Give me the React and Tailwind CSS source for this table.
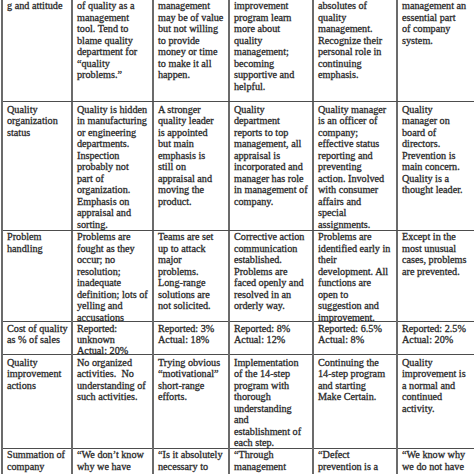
import React from 'react';

const rows = [
  {
    h: 'h-[102px]',
    pt: 'pt-0',
    cells: [
      ['g and attitude'],
      ['of quality as a', 'management', 'tool. Tend to', 'blame quality', 'department for', '“quality', 'problems.”'],
      ['management', 'may be of value', 'but not willing', 'to provide', 'money or time', 'to make it all', 'happen.'],
      ['improvement', 'program learn', 'more about', 'quality', 'management;', 'becoming', 'supportive and', 'helpful.'],
      ['absolutes of', 'quality', 'management.', 'Recognize their', 'personal role in', 'continuing', 'emphasis.'],
      ['management an', 'essential part', 'of company', 'system.'],
    ],
  },
  {
    h: 'h-[129px]',
    pt: 'pt-[1.5px]',
    cells: [
      ['Quality', 'organization', 'status'],
      ['Quality is hidden', 'in manufacturing', 'or engineering', 'departments.', 'Inspection', 'probably not', 'part of', 'organization.', 'Emphasis on', 'appraisal and', 'sorting.'],
      ['A stronger', 'quality leader', 'is appointed', 'but main', 'emphasis is', 'still on', 'appraisal and', 'moving the', 'product.'],
      ['Quality', 'department', 'reports to top', 'management, all', 'appraisal is', 'incorporated and', 'manager has role', 'in management of', 'company.'],
      ['Quality manager', 'is an officer of', 'company;', 'effective status', 'reporting and', 'preventing', 'action. Involved', 'with consumer', 'affairs and', 'special', 'assignments.'],
      ['Quality', 'manager on', 'board of', 'directors.', 'Prevention is', 'main concern.', 'Quality is a', 'thought leader.'],
    ],
  },
  {
    h: 'h-[91px]',
    pt: 'pt-0',
    cells: [
      ['Problem', 'handling'],
      ['Problems are', 'fought as they', 'occur; no', 'resolution;', 'inadequate', 'definition; lots of', 'yelling and', 'accusations'],
      ['Teams are set', 'up to attack', 'major', 'problems.', 'Long-range', 'solutions are', 'not solicited.'],
      ['Corrective action', 'communication', 'established.', 'Problems are', 'faced openly and', 'resolved in an', 'orderly way.'],
      ['Problems are', 'identified early in', 'their', 'development. All', 'functions are', 'open to', 'suggestion and', 'improvement.'],
      ['Except in the', 'most unusual', 'cases, problems', 'are prevented.'],
    ],
  },
  {
    h: 'h-[33px] leading-[11px]',
    pt: 'pt-[0.5px]',
    cells: [
      ['Cost of quality', 'as % of sales'],
      ['Reported:', 'unknown', 'Actual: 20%'],
      ['Reported: 3%', 'Actual: 18%'],
      ['Reported: 8%', 'Actual: 12%'],
      ['Reported: 6.5%', 'Actual: 8%'],
      ['Reported: 2.5%', 'Actual: 20%'],
    ],
  },
  {
    h: 'h-[94px]',
    pt: 'pt-[1.5px]',
    cells: [
      ['Quality', 'improvement', 'actions'],
      ['No organized', 'activities.  No', 'understanding of', 'such activities.'],
      ['Trying obvious', '“motivational”', 'short-range', 'efforts.'],
      ['Implementation', 'of the 14-step', 'program with', 'thorough', 'understanding', 'and', 'establishment of', 'each step.'],
      ['Continuing the', '14-step program', 'and starting', 'Make Certain.'],
      ['Quality', 'improvement is', 'a normal and', 'continued', 'activity.'],
    ],
  },
  {
    h: 'h-[40px]',
    pt: 'pt-0',
    cells: [
      ['Summation of', 'company'],
      ['“We don’t know', 'why we have'],
      ['“Is it absolutely', 'necessary to'],
      ['“Through', 'management'],
      ['“Defect', 'prevention is a'],
      ['“We know why', 'we do not have'],
    ],
  },
];

export default function App() {
  return (
    <div className="w-[474px] h-[474px] overflow-hidden bg-white pl-px">
      <div className="w-[477px] border-l-2 border-[#6b6b6b] font-['Liberation_Serif',serif] text-[10.2px] leading-[11.5px] text-[#2b2b2b] [-webkit-text-stroke:0.3px_#2b2b2b]">
        {rows.map((row, r) => (
          <div
            key={r}
            className={`grid grid-cols-[70px_81px_76px_84px_84px_80px] border-b border-[#4d4d4d] ${row.h}`}
          >
            {row.cells.map((lines, c) => (
              <div
                key={c}
                className={`border-r-2 border-[#6b6b6b] pl-[4px] whitespace-pre ${row.pt}`}
              >
                {lines.map((line, i) => (
                  <div key={i}>{line}</div>
                ))}
              </div>
            ))}
          </div>
        ))}
      </div>
    </div>
  );
}
